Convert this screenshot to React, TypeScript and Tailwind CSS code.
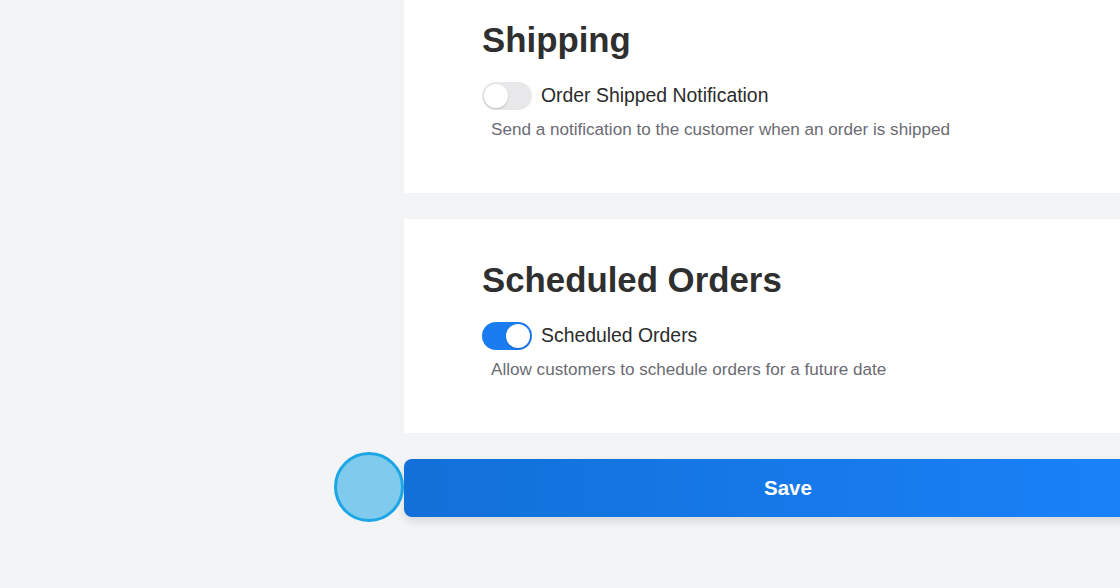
import React from "react";

function Toggle({ on }: { on: boolean }) {
  return (
    <div
      className={
        "relative w-[50px] h-[28px] rounded-full shrink-0 " +
        (on ? "bg-[#1a7cf0]" : "bg-[#e8e8ea]")
      }
    >
      <div
        className={
          "absolute top-[2px] w-[24px] h-[24px] rounded-full bg-white shadow-[0_1px_2px_rgba(0,0,0,0.18)] " +
          (on ? "left-[24px]" : "left-[2px]")
        }
      />
    </div>
  );
}

function Panel({
  title,
  label,
  desc,
  on,
}: {
  title: string;
  label: string;
  desc: string;
  on: boolean;
}) {
  return (
    <div className="bg-white h-[214px] pl-[78px] pt-[41px]">
      <h2 className="text-[34.8px] leading-[40px] font-bold text-[#2f2f2f]">{title}</h2>
      <div className="mt-[22px] flex items-center h-[28px] gap-[9px]">
        <Toggle on={on} />
        <span className="text-[19.4px] text-[#2b2b2b]">{label}</span>
      </div>
      <p className="mt-[8px] ml-[9px] text-[17.1px] leading-[24px] text-[#6b6b73]">{desc}</p>
    </div>
  );
}

export default function App() {
  return (
    <div
      className="relative w-[1120px] h-[588px] overflow-hidden bg-[#f3f4f6]"
      style={{ fontFamily: '"Liberation Sans", Arial, sans-serif' }}
    >
      <div className="ml-[404px] w-[768px] -mt-[21px] flex flex-col gap-[26px]">
        <Panel
          title="Shipping"
          label="Order Shipped Notification"
          desc="Send a notification to the customer when an order is shipped"
          on={false}
        />
        <Panel
          title="Scheduled Orders"
          label="Scheduled Orders"
          desc="Allow customers to schedule orders for a future date"
          on={true}
        />
        <button className="h-[58px] rounded-lg bg-gradient-to-r from-[#1270d8] to-[#1a82fa] text-white font-bold text-[20.5px] shadow-[0_4px_10px_rgba(0,0,0,0.12)]">
          Save
        </button>
      </div>
      <div className="absolute left-[334px] top-[452px] w-[70px] h-[70px] rounded-full bg-[#80caee] border-[3px] border-[#1ba6e5]" />
    </div>
  );
}
